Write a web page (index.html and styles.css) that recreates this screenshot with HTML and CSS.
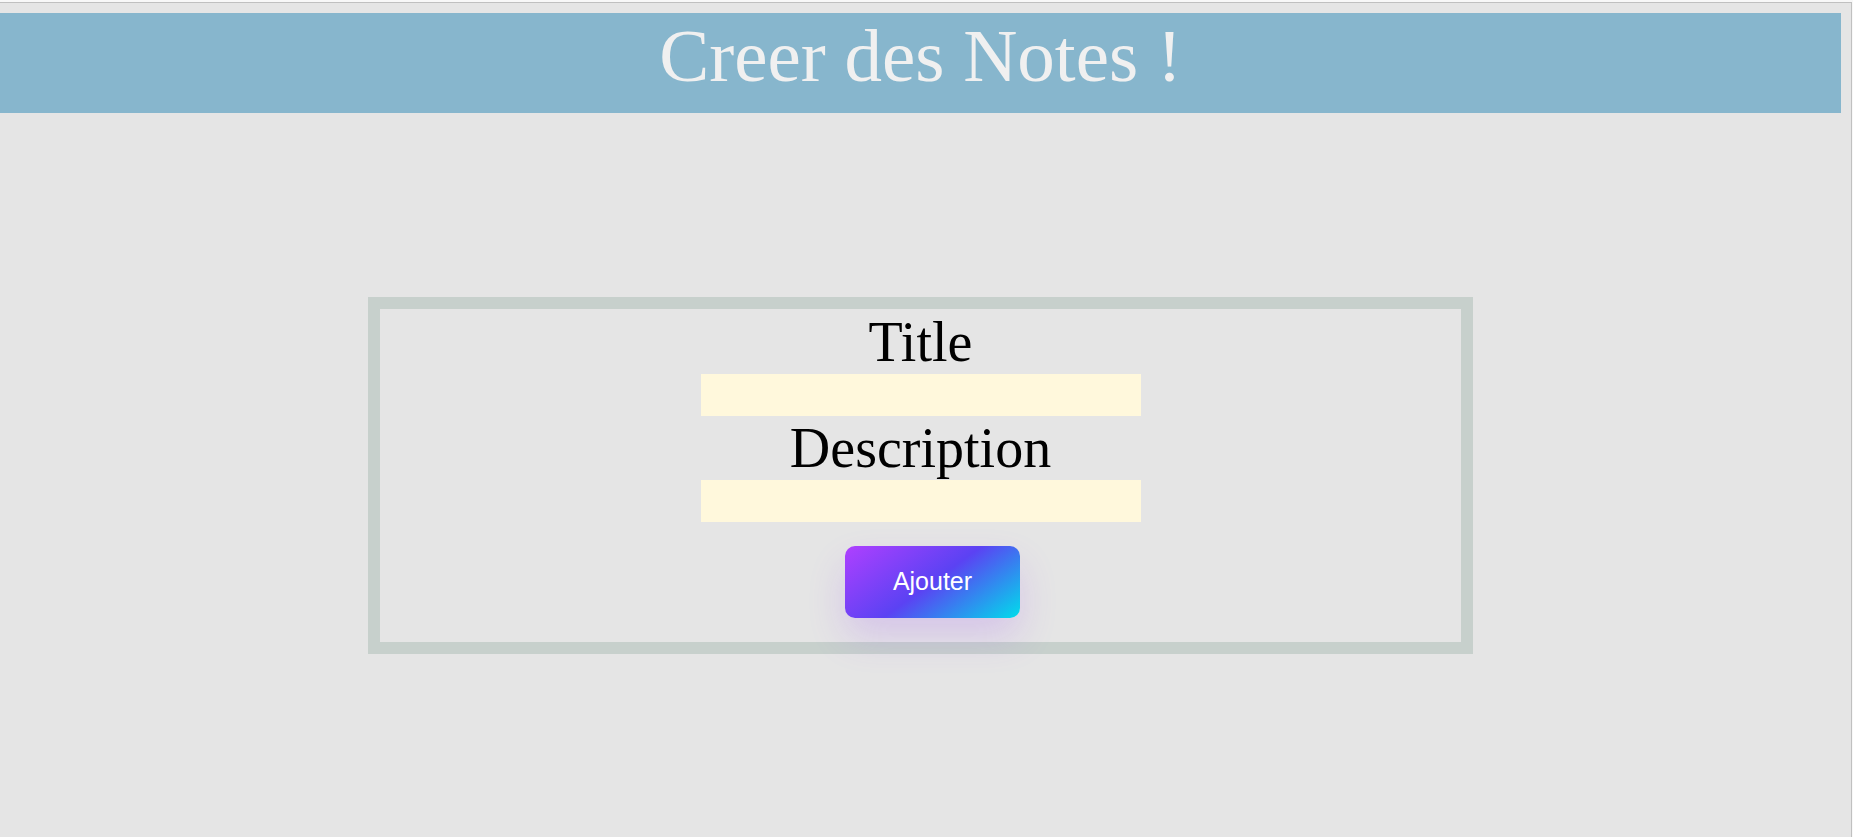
FILE: index.html
```html
<!DOCTYPE html>
<html lang="fr">
<head>
<meta charset="utf-8">
<meta name="viewport" content="width=device-width, initial-scale=1">
<title>Creer des Notes !</title>
<link rel="stylesheet" href="styles.css">
</head>
<body class="page">
<div class="frame">
  <header class="header">
    <h1 class="header-title">Creer des Notes !</h1>
  </header>
  <main>
    <form class="note-form">
      <label class="note-label" for="title">Title</label>
      <input class="note-input" type="text" id="title" name="title">
      <label class="note-label" for="description">Description</label>
      <input class="note-input" type="text" id="description" name="description">
      <button class="add-button" type="button">Ajouter</button>
    </form>
  </main>
</div>
</body>
</html>
```
FILE: styles.css
```css
* {
  box-sizing: border-box;
}

.page {
  margin: 0;
  padding: 2px 1px 0 0;
  min-height: 100vh;
  display: flex;
  background: #f8f8f8;
  font-family: "Liberation Serif", "Times New Roman", serif;
}

.frame {
  flex: 1;
  padding: 10px 10px 0 0;
  background: #e5e5e5;
  border-top: 1px solid #c0c0c0;
  border-right: 1px solid #c0c0c0;
}

.header {
  min-height: 100px;
  background: #87b6cd;
  text-align: center;
}

.header-title {
  margin: 0;
  font-size: 75px;
  font-weight: 400;
  line-height: 86px;
  color: #f0f0f0;
}

.note-form {
  width: 60%;
  margin: 184px auto 0;
  padding: 1px 0 24px;
  display: flex;
  flex-direction: column;
  align-items: center;
  border: 12px solid #c7d0cc;
}

.note-label {
  font-size: 56px;
  line-height: 64px;
  color: #000000;
}

.note-input {
  width: 440px;
  max-width: 100%;
  height: 42px;
  padding: 0 8px;
  border: 0;
  background: #fff8dc;
  font-size: 25px;
}

.add-button {
  margin: 24px 0 0 24px;
  padding: 21px 48px 23px;
  border: 0;
  border-radius: 10px;
  background: linear-gradient(144deg, #af40ff, #5b42f3 50%, #00ddeb);
  box-shadow: rgba(151, 65, 252, 0.2) 0 19px 38px -1px;
  font-family: "Liberation Sans", Arial, sans-serif;
  font-size: 25px;
  line-height: 28px;
  color: #ffffff;
  cursor: pointer;
}
```
